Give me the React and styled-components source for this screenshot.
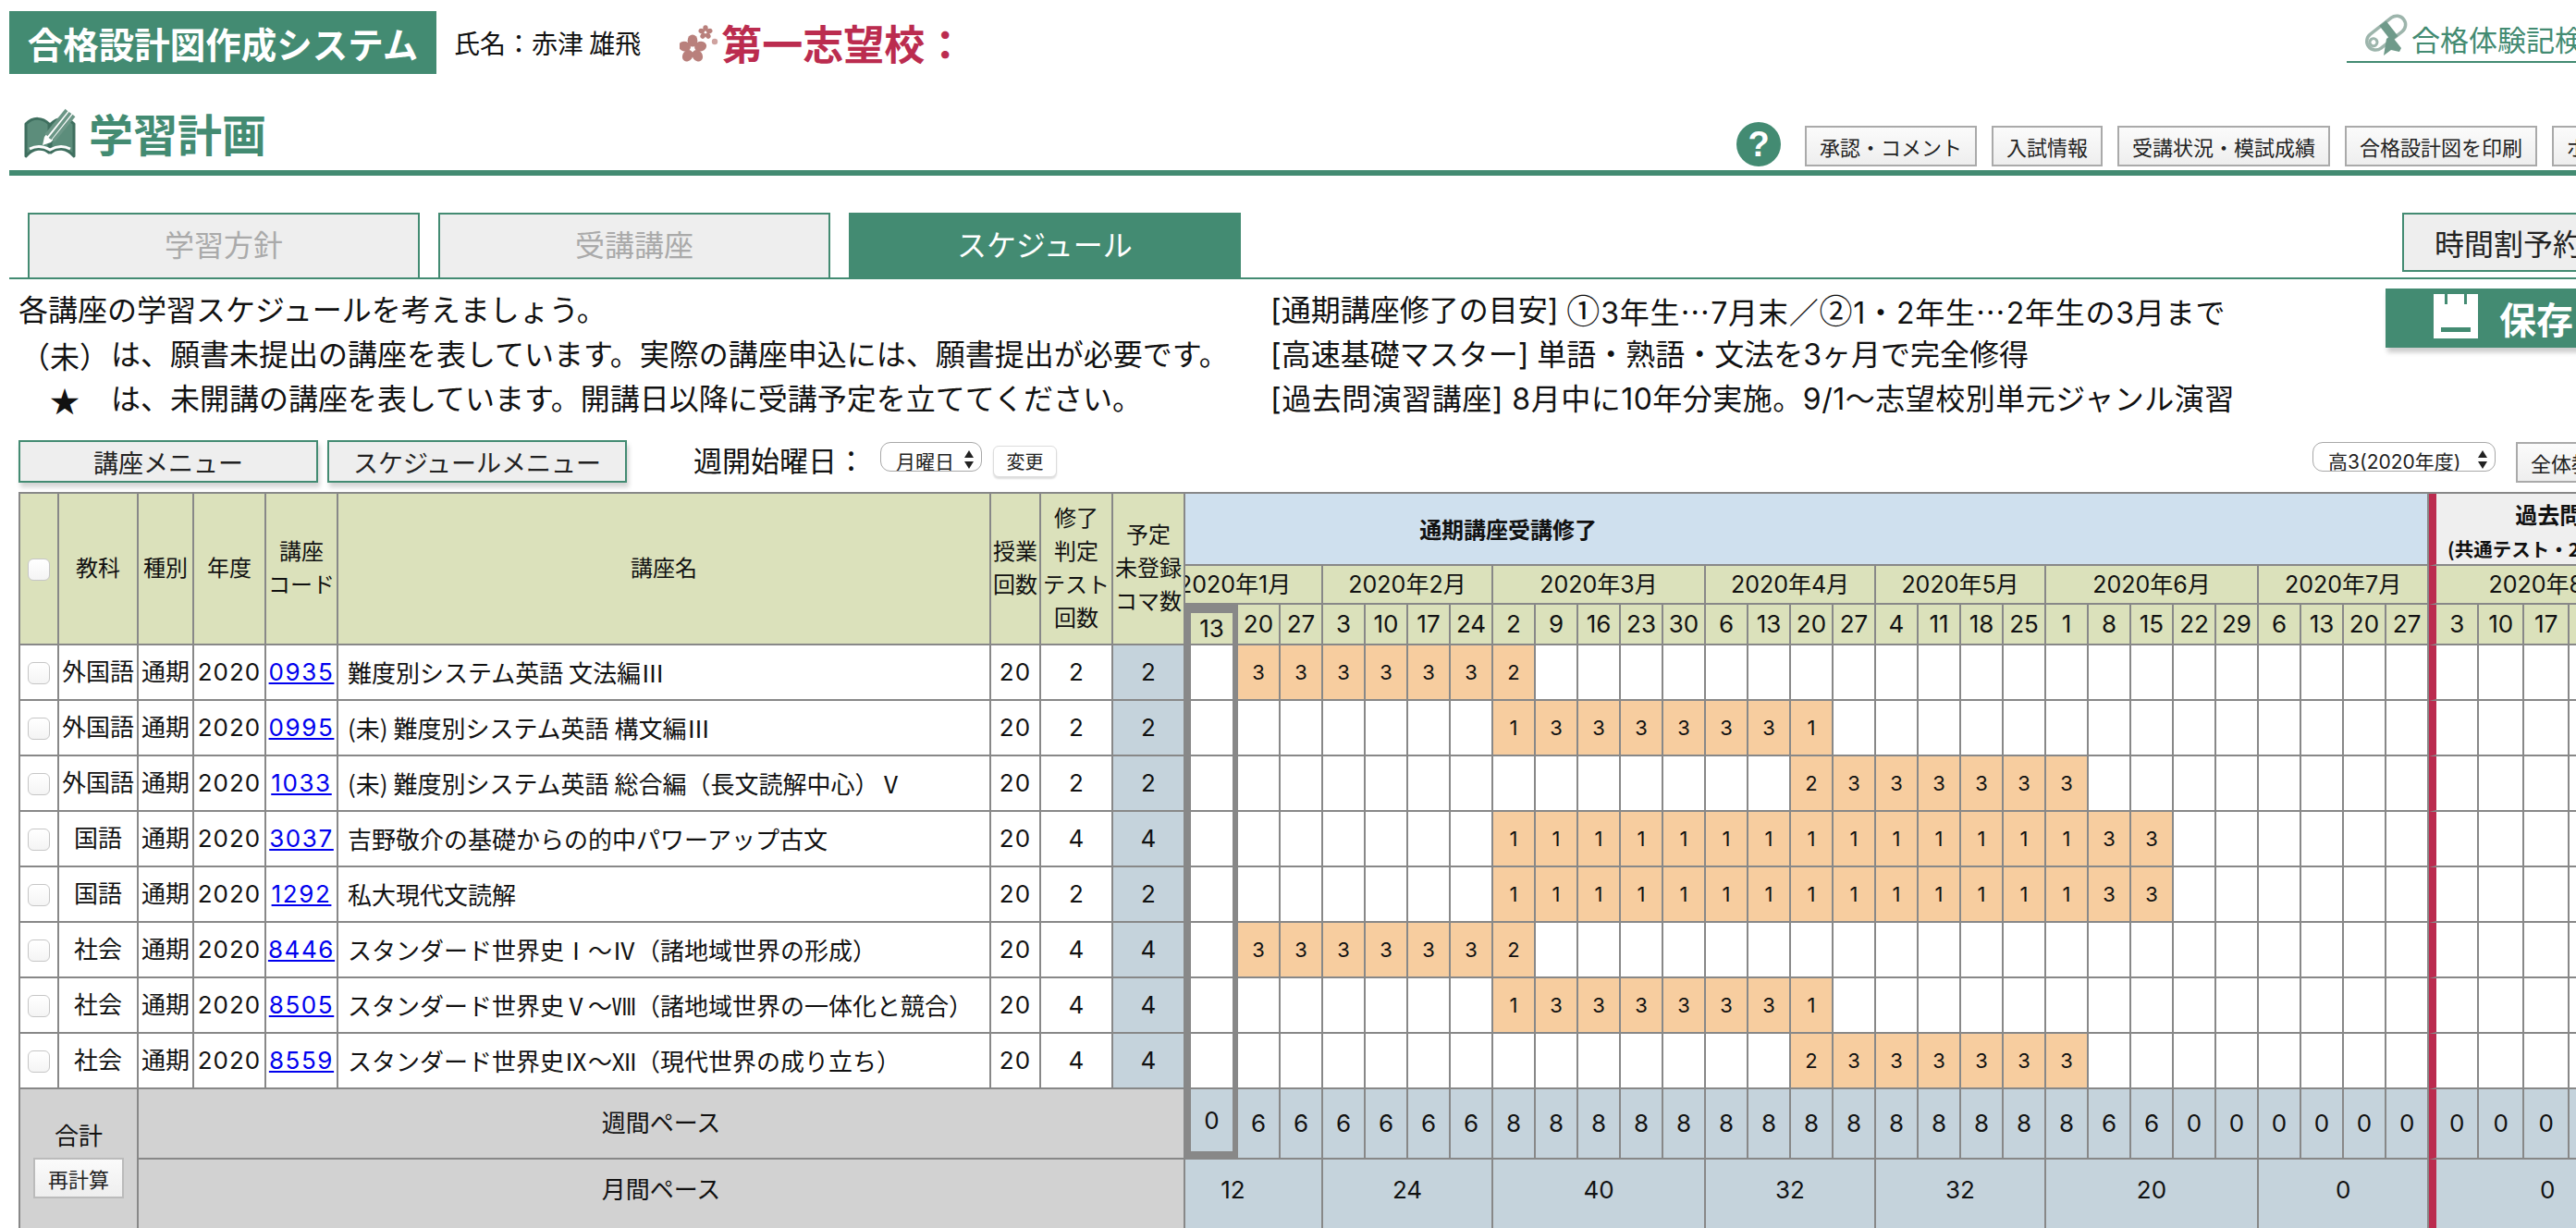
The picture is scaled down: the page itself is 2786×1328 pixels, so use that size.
import React from "react";
import styled, { createGlobalStyle } from "styled-components";

const GREEN = "#438b72";
const LINE = "#888888";
const RED = "#bb2c4f";
const SANS = `Inter, "Noto Sans CJK JP", sans-serif`;
const CJK = `"Noto Sans CJK JP", sans-serif`;

const Global = createGlobalStyle`
  html, body { margin: 0; padding: 0; width: 2786px; height: 1328px; overflow: hidden; background: #fff; }
  body { font-family: ${SANS}; color: #111; }
  * { box-sizing: border-box; }
`;

const Page = styled.div`
  width: 2786px;
  height: 1328px;
  overflow: hidden;
`;

/* ---------- top bar ---------- */
const TopBar = styled.header`
  display: flex;
  align-items: flex-start;
  height: 80px;
  padding: 12px 0 0 10px;
`;
const Logo = styled.div`
  flex: 0 0 462px;
  height: 68px;
  display: flex;
  align-items: center;
  justify-content: center;
  background: ${GREEN};
  color: #fff;
  font: 700 38.5px/1 ${CJK};
  white-space: nowrap;
`;
const Student = styled.div`
  margin-left: 19px;
  font: 28px/68px ${CJK};
  white-space: nowrap;
`;
const Goal = styled.div`
  margin-left: 42px;
  height: 68px;
  display: flex;
  align-items: center;
  color: ${RED};
  font: 700 44px/1 ${CJK};
  white-space: nowrap;
`;
const Grow = styled.div`
  flex: 1;
`;
const ExperienceLink = styled.a`
  flex: 0 0 248px;
  min-width: 0;
  height: 56px;
  display: flex;
  align-items: flex-start;
  gap: 2px;
  padding-left: 18px;
  border-bottom: 2px solid ${GREEN};
  color: ${GREEN};
  font: 31px/46px ${CJK};
  text-decoration: none;
  white-space: nowrap;
  overflow: hidden;
`;
const LinkText = styled.span`
  margin-top: 7px;
`;

/* ---------- title bar ---------- */
const TitleBar = styled.div`
  display: flex;
  align-items: flex-end;
  height: 110px;
  margin-left: 10px;
  border-bottom: 6px solid ${GREEN};
`;
const TitleBlock = styled.div`
  display: flex;
  align-items: center;
  gap: 14px;
  padding: 0 0 12px 16px;
`;
const TitleText = styled.h1`
  margin: 0;
  color: ${GREEN};
  font: 700 48px/1 ${CJK};
  white-space: nowrap;
`;
const ActionGroup = styled.div`
  flex: 0 0 908px;
  min-width: 0;
  display: flex;
  align-items: flex-end;
  padding-bottom: 4px;
  gap: 16px;
  white-space: nowrap;
`;
const HelpMark = styled.span`
  flex: 0 0 48px;
  height: 48px;
  margin-right: 10px;
  border-radius: 50%;
  background: ${GREEN};
  color: #fff;
  font: 700 38px/48px "Liberation Sans", sans-serif;
  text-align: center;
`;
const ActionButton = styled.button`
  flex: none;
  height: 44px;
  padding: 0 14px;
  border: 2px solid #aaa;
  background: linear-gradient(#fbfbfb, #eeeeee);
  color: #222;
  font: 22px/1 ${CJK};
`;

/* ---------- tabs ---------- */
const TabBar = styled.nav`
  display: flex;
  align-items: flex-start;
  gap: 20px;
  height: 72px;
  margin: 40px 0 0 10px;
  padding-left: 20px;
  border-bottom: 2px solid ${GREEN};
`;
const Tab = styled.div`
  flex: 0 0 424px;
  height: 70px;
  display: flex;
  align-items: center;
  justify-content: center;
  padding-bottom: 6px;
  border: 2px solid ${GREEN};
  border-bottom: 0;
  background: ${(p) => (p.$active ? GREEN : "#eeeeee")};
  color: ${(p) => (p.$active ? "#fff" : "#aaa")};
  font: 32px/1 ${CJK};
`;
const ReserveButton = styled.button`
  flex: 0 0 260px;
  height: 64px;
  margin-right: -72px;
  padding: 0 0 0 33px;
  border: 2px solid ${GREEN};
  background: #eeeeee;
  color: #222;
  text-align: left;
  font: 32px/1 ${CJK};
  white-space: nowrap;
`;

/* ---------- notes ---------- */
const Notes = styled.section`
  display: flex;
  align-items: flex-start;
  padding: 10px 0 0 20px;
  height: 154px;
`;
const NoteColumn = styled.div`
  flex: 0 0 ${(p) => p.$width}px;
  min-width: 0;
`;
const NoteLine = styled.div`
  display: flex;
  height: 48px;
  font-size: 32px;
  line-height: 48px;
  letter-spacing: ${(p) => p.$track || 0}px;
  white-space: pre;
`;
const NoteMarker = styled.span`
  flex: 0 0 100px;
  text-align: center;
  font-family: ${CJK};
`;
const WideRun = styled.span`
  letter-spacing: 0.8px;
`;
const Mid = styled.span`
  font-family: ${CJK};
`;
const Circled = styled.span`
  font-family: ${CJK};
  font-size: 36px;
  line-height: 1;
`;
const SaveButton = styled.button`
  flex: 0 0 300px;
  height: 64px;
  display: flex;
  align-items: center;
  gap: 23px;
  padding: 0 0 0 52px;
  border: 0;
  background: ${GREEN};
  box-shadow: 2px 5px 5px #ccc;
  color: #fff;
  font: 700 40px/1 ${CJK};
`;

/* ---------- toolbar ---------- */
const Toolbar = styled.div`
  display: flex;
  align-items: flex-start;
  height: 46px;
  margin: 20px 0 10px;
  padding-left: 20px;
  white-space: nowrap;
`;
const MenuButton = styled.button`
  flex: 0 0 324px;
  height: 46px;
  margin-right: 10px;
  border: 2px solid ${GREEN};
  background: #eeeeee;
  box-shadow: 2px 5px 5px #d4d4d4;
  color: #222;
  font: 27px/1 ${CJK};
`;
const WeekLabel = styled.span`
  margin: 0 16px 0 62px;
  font: 31px/42px ${CJK};
`;
const SelectBox = styled.div`
  flex: 0 0 ${(p) => p.$width}px;
  height: 32px;
  margin-top: 2px;
  display: flex;
  align-items: flex-start;
  justify-content: space-between;
  padding: 7px 6px 0 ${(p) => p.$pad}px;
  overflow: hidden;
  border: 1.5px solid #a8a8a8;
  border-radius: 11px;
  background: #fff;
  font-size: 21px;
  line-height: 28px;
  color: #222;
`;
const SmallButton = styled.button`
  flex: 0 0 69px;
  height: 34px;
  margin: 6px 0 0 12px;
  padding: 0;
  border: 1px solid #ddd;
  border-radius: 6px;
  background: #fff;
  box-shadow: 0 2px 2px #ddd;
  color: #222;
  font: 20px/1 ${CJK};
`;
const ToolRight = styled.div`
  flex: 0 0 285px;
  min-width: 0;
  display: flex;
  align-items: flex-start;
  gap: 22px;
`;
const OverviewButton = styled.button`
  flex: 0 0 120px;
  height: 44px;
  margin-top: 2px;
  padding: 0 0 0 14px;
  border: 2px solid #aaa;
  background: linear-gradient(#fbfbfb, #eeeeee);
  color: #222;
  text-align: left;
  white-space: nowrap;
  font: 22px/1 ${CJK};
`;

/* ---------- table ---------- */
const Table = styled.table`
  table-layout: fixed;
  width: ${(p) => p.$width}px;
  margin-left: 20px;
  border-collapse: separate;
  border-spacing: 0;
  border-top: 2px solid ${LINE};
  border-left: 2px solid ${LINE};
`;
const Cell = styled.td`
  height: ${(p) => p.$h || 60}px;
  padding: 0;
  overflow: ${(p) => (p.$clip ? "hidden" : "visible")};
  border-right: 2px solid ${LINE};
  border-bottom: 2px solid ${LINE};
  border-left: ${(p) => (p.$divider ? `8px solid ${RED}` : p.$focus ? `6px solid ${LINE}` : "0")};
  ${(p) => p.$focus && `border-right: 6px solid ${LINE};`}
  ${(p) => p.$focusTop && `border-top: 9px solid ${LINE};`}
  ${(p) => p.$focusBottom && `border-bottom: 9px solid ${LINE};`}
  background: ${(p) => p.$bg || "#fff"};
  font-size: 26px;
  line-height: 34px;
  text-align: center;
  white-space: nowrap;
`;
const HeadCell = styled(Cell).attrs({ as: "th" })`
  font-size: 24px;
  font-weight: 400;
  line-height: 36px;
  background: ${(p) => p.$bg || "#dbe1bb"};
`;
const DayCell = styled(HeadCell)`
  font-size: 26px;
  line-height: 30px;
`;
const BandTitle = styled.div`
  font: 700 24px/42px ${CJK};
  padding-right: ${(p) => p.$pr || 0}px;
`;
const BandNote = styled.div`
  font: 700 20.5px/32px ${CJK};
`;
const MonthText = styled.span`
  display: ${(p) => (p.$pull ? "block" : "inline-block")};
  font-size: 25px;
  ${(p) => p.$pull && `margin-left: -${p.$pull}px; text-align: left;`}
`;
const NameCell = styled(Cell)`
  padding-left: 10px;
  text-align: left;
  font-family: ${CJK};
`;
const CodeLink = styled.a`
  color: #0000ee;
  text-decoration: underline;
  letter-spacing: 1.6px;
`;
const Year = styled.span`
  letter-spacing: 1px;
`;
const Check = styled.input.attrs({ type: "checkbox" })`
  display: block;
  appearance: none;
  width: 24px;
  height: 24px;
  margin: 2px auto 0;
  border: 1.5px solid #c6c6c6;
  border-radius: 6px;
  background: linear-gradient(#ffffff, #f4f4f4);
`;
const PlanCell = styled(Cell)`
  font-size: 22px;
`;
const TotalCell = styled(Cell)`
  vertical-align: top;
`;
const TotalBox = styled.div`
  display: flex;
  flex-direction: column;
  align-items: center;
  height: 150px;
  padding-top: 34px;
`;
const TotalLabel = styled.div`
  font-size: 26px;
  line-height: 34px;
`;
const RecalcButton = styled.button`
  width: 98px;
  height: 44px;
  margin-top: 6px;
  padding: 0;
  border: 2px solid #bbb;
  background: linear-gradient(#fbfbfb, #eeeeee);
  color: #222;
  font: 22px/1 ${CJK};
`;
const MonthRowCell = styled(Cell)`
  padding-bottom: 8px;
`;
const MonthTotal = styled.span`
  display: inline-block;
  padding-right: ${(p) => p.$pr || 0}px;
`;

/* ---------- drawings ---------- */
const Soft = styled.svg`
  flex: none;
  filter: blur(0.6px);
`;

const Blossom = ({ cx, cy, r }) => (
  <g transform={`translate(${cx} ${cy})`}>
    {[0, 72, 144, 216, 288].map((a) => (
      <ellipse key={a} cx="0" cy={-r * 0.6} rx={r * 0.36} ry={r * 0.44} transform={`rotate(${a})`} fill="#b9807c" />
    ))}
  </g>
);
const SakuraIcon = () => (
  <Soft width="45" height="44" viewBox="0 0 45 44" style={{ marginTop: 2 }}>
    <Blossom cx={14} cy={28} r={15} />
    <Blossom cx={28} cy={10} r={7.5} />
    <circle cx="38" cy="20" r="3.2" fill="#cfa3a0" />
  </Soft>
);
const BookIcon = () => (
  <Soft width="56" height="58" viewBox="0 0 56 58">
    <path d="M2 55V20c8-8 18-7 25 0v31c-7-6-17-5-25 4Z" fill="#5c8d7b" stroke="#3f6f5f" strokeWidth="3" strokeLinejoin="round" />
    <path d="M54 55V20c-8-8-18-7-25 0v31c7-6 17-5 25 4Z" fill="#5c8d7b" stroke="#3f6f5f" strokeWidth="3" strokeLinejoin="round" />
    <path d="M6 47c8-4 15-3 22 1 7-4 14-5 22-1" fill="none" stroke="#fff" strokeWidth="3" />
    <path d="M22 34 47 2l8 7-26 31-9 3Z" fill="#fff" />
    <path d="M24 32 46 5M28 36 50 8M32 38 54 11" stroke="#6b9686" strokeWidth="3.6" />
  </Soft>
);
const ScrollIcon = () => (
  <Soft width="50" height="48" viewBox="0 0 50 48" style={{ marginTop: 2 }}>
    <g transform="rotate(-38 25 22)">
      <rect x="1" y="12" width="48" height="19" rx="9.5" fill="#fff" stroke="#9db5ac" strokeWidth="3.5" />
      <circle cx="8" cy="21" r="4" fill="none" stroke="#9db5ac" strokeWidth="3" />
      <rect x="24" y="11" width="9" height="21" fill="#6f9a8a" />
    </g>
    <path d="M25 28 22 46l8-6 9 2 2-4-11-14Z" fill="#6f9a8a" />
  </Soft>
);
const FloppyIcon = () => (
  <svg width="48" height="48" viewBox="0 0 48 48" style={{ flex: "none", marginTop: -4 }}>
    <path d="M0 0h12v11h3V0h18v11h3V0h12v48H0Z" fill="#fff" />
    <rect x="8" y="36" width="32" height="5" fill={GREEN} />
  </svg>
);
const Updown = () => (
  <svg width="14" height="24" viewBox="0 0 14 24" style={{ flex: "none" }}>
    <path d="M7 1 12 9H2ZM7 21 2 13H12Z" fill="#222" />
  </svg>
);

/* ---------- data ---------- */
const MONTHS = [
  { label: "2020年1月", days: [13, 20, 27], total: 12 },
  { label: "2020年2月", days: [3, 10, 17, 24], total: 24 },
  { label: "2020年3月", days: [2, 9, 16, 23, 30], total: 40 },
  { label: "2020年4月", days: [6, 13, 20, 27], total: 32 },
  { label: "2020年5月", days: [4, 11, 18, 25], total: 32 },
  { label: "2020年6月", days: [1, 8, 15, 22, 29], total: 20 },
  { label: "2020年7月", days: [6, 13, 20, 27], total: 0 },
  { label: "2020年8月", days: [3, 10, 17, 24, 31], total: 0 },
  { label: "2020年9月", days: [7, 14], total: 0 },
];
const DAYS = MONTHS.flatMap((m) => m.days);
const SPLIT = 29;

const paced = (from, vals) => Object.fromEntries(vals.map((v, i) => [from + i, v]));
const PLAN_A = paced(1, [3, 3, 3, 3, 3, 3, 2]);
const PLAN_B = paced(7, [1, 3, 3, 3, 3, 3, 3, 1]);
const PLAN_C = paced(14, [2, 3, 3, 3, 3, 3, 3]);
const PLAN_D = paced(7, [1, 1, 1, 1, 1, 1, 1, 1, 1, 1, 1, 1, 1, 1, 3, 3]);

const COURSES = [
  ["外国語", "0935", "難度別システム英語 文法編Ⅲ", 2, 2, PLAN_A],
  ["外国語", "0995", "(未) 難度別システム英語 構文編Ⅲ", 2, 2, PLAN_B],
  ["外国語", "1033", "(未) 難度別システム英語 総合編（長文読解中心）Ⅴ", 2, 2, PLAN_C],
  ["国語", "3037", "吉野敬介の基礎からの的中パワーアップ古文", 4, 4, PLAN_D],
  ["国語", "1292", "私大現代文読解", 2, 2, PLAN_D],
  ["社会", "8446", "スタンダード世界史Ⅰ〜Ⅳ（諸地域世界の形成）", 4, 4, PLAN_A],
  ["社会", "8505", "スタンダード世界史Ⅴ〜Ⅷ（諸地域世界の一体化と競合）", 4, 4, PLAN_B],
  ["社会", "8559", "スタンダード世界史Ⅸ〜Ⅻ（現代世界の成り立ち）", 4, 4, PLAN_C],
];
const weekTotal = (i) => {
  if (i === 0) return 0;
  if (i <= 6) return 6;
  if (i <= 20) return 8;
  if (i <= 22) return 6;
  return 0;
};

const FIXED = [44, 86, 60, 78, 78, 706, 54, 78, 78];
const dayWidth = (i) => (i === 0 ? 57 : i < SPLIT ? 46 : i === SPLIT ? 54 : 49);
const WIDTHS = [...FIXED, ...DAYS.map((_, i) => dayWidth(i))];
WIDTHS[0] -= 2;
const TABLE_WIDTH = WIDTHS.reduce((a, b) => a + b, 0) + 2;

const BLUE = "#c5d3dc";
const GRAY = "#d2d2d2";

const ScheduleTable = () => {
  let index = 0;
  const monthRanges = MONTHS.map((m) => {
    const start = index;
    index += m.days.length;
    return { ...m, start };
  });
  return (
    <Table $width={TABLE_WIDTH}>
      <colgroup>
        {WIDTHS.map((w, i) => (
          <col key={i} style={{ width: w }} />
        ))}
      </colgroup>
      <thead>
        <tr>
          <HeadCell rowSpan={3} $h={164}><Check /></HeadCell>
          <HeadCell rowSpan={3}>教科</HeadCell>
          <HeadCell rowSpan={3}>種別</HeadCell>
          <HeadCell rowSpan={3}>年度</HeadCell>
          <HeadCell rowSpan={3}>講座<br />コード</HeadCell>
          <HeadCell rowSpan={3}>講座名</HeadCell>
          <HeadCell rowSpan={3}>授業<br />回数</HeadCell>
          <HeadCell rowSpan={3}>修了<br />判定<br />テスト<br />回数</HeadCell>
          <HeadCell rowSpan={3}>予定<br />未登録<br />コマ数</HeadCell>
          <HeadCell colSpan={SPLIT} $h={78} $bg="#cfe0ee">
            <BandTitle $pr={645}>通期講座受講修了</BandTitle>
          </HeadCell>
          <HeadCell colSpan={DAYS.length - SPLIT} $h={78} $bg="#efefef" $divider>
            <BandTitle>過去問演習講座</BandTitle>
            <BandNote>(共通テスト・2次・私大過去問等)</BandNote>
          </HeadCell>
        </tr>
        <tr>
          {monthRanges.map((m, i) => (
            <HeadCell key={m.label} colSpan={m.days.length} $h={42} $divider={m.start === SPLIT} $clip={i === 0}>
              <MonthText $pull={i === 0 ? 8 : 0}>{m.label}</MonthText>
            </HeadCell>
          ))}
        </tr>
        <tr>
          {DAYS.map((d, i) => (
            <DayCell key={i} $h={44} $divider={i === SPLIT} $focus={i === 0} $focusTop={i === 0}>
              {d}
            </DayCell>
          ))}
        </tr>
      </thead>
      <tbody>
        {COURSES.map(([subject, code, name, tests, pending, plan]) => (
          <tr key={code}>
            <Cell><Check /></Cell>
            <Cell>{subject}</Cell>
            <Cell>通期</Cell>
            <Cell><Year>2020</Year></Cell>
            <Cell><CodeLink href="#">{code}</CodeLink></Cell>
            <NameCell>{name}</NameCell>
            <Cell><Year>20</Year></Cell>
            <Cell>{tests}</Cell>
            <Cell $bg={BLUE}>{pending}</Cell>
            {DAYS.map((_, i) => (
              <PlanCell key={i} $bg={plan[i] ? "#f7cd9f" : "#fff"} $focus={i === 0} $divider={i === SPLIT}>
                {plan[i]}
              </PlanCell>
            ))}
          </tr>
        ))}
        <tr>
          <TotalCell colSpan={2} rowSpan={2} $bg={GRAY}>
            <TotalBox>
              <TotalLabel>合計</TotalLabel>
              <RecalcButton>再計算</RecalcButton>
            </TotalBox>
          </TotalCell>
          <Cell colSpan={7} $h={76} $bg={GRAY}>週間ペース</Cell>
          {DAYS.map((_, i) => (
            <Cell key={i} $h={76} $bg={BLUE} $focus={i === 0} $focusBottom={i === 0} $divider={i === SPLIT}>
              {weekTotal(i)}
            </Cell>
          ))}
        </tr>
        <tr>
          <MonthRowCell colSpan={7} $h={76} $bg={GRAY}>月間ペース</MonthRowCell>
          {monthRanges.map((m, i) => (
            <MonthRowCell key={m.label} colSpan={m.days.length} $h={76} $bg={BLUE} $divider={m.start === SPLIT}>
              <MonthTotal $pr={i === 0 ? 44 : 0}>{m.total}</MonthTotal>
            </MonthRowCell>
          ))}
        </tr>
      </tbody>
    </Table>
  );
};

export default function App() {
  return (
    <Page>
      <Global />
      <TopBar>
        <Logo>合格設計図作成システム</Logo>
        <Student>氏名：赤津 雄飛</Student>
        <Goal>
          <SakuraIcon />
          第一志望校：
        </Goal>
        <Grow />
        <ExperienceLink href="#">
          <ScrollIcon />
          <LinkText>合格体験記検索</LinkText>
        </ExperienceLink>
      </TopBar>
      <TitleBar>
        <TitleBlock>
          <BookIcon />
          <TitleText>学習計画</TitleText>
        </TitleBlock>
        <Grow />
        <ActionGroup>
          <HelpMark>?</HelpMark>
          <ActionButton>承認・コメント</ActionButton>
          <ActionButton>入試情報</ActionButton>
          <ActionButton>受講状況・模試成績</ActionButton>
          <ActionButton>合格設計図を印刷</ActionButton>
          <ActionButton>ポートフォリオ</ActionButton>
        </ActionGroup>
      </TitleBar>
      <TabBar>
        <Tab>学習方針</Tab>
        <Tab>受講講座</Tab>
        <Tab $active>スケジュール</Tab>
        <Grow />
        <ReserveButton>時間割予約</ReserveButton>
      </TabBar>
      <Notes>
        <NoteColumn $width={1354}>
          <NoteLine>各講座の学習スケジュールを考えましょう。</NoteLine>
          <NoteLine>
            <NoteMarker>（未）</NoteMarker>は、願書未提出の講座を表しています。実際の講座申込には、願書提出が必要です。
          </NoteLine>
          <NoteLine>
            <NoteMarker>★</NoteMarker>は、未開講の講座を表しています。開講日以降に受講予定を立ててください。
          </NoteLine>
        </NoteColumn>
        <NoteColumn $width={1206}>
          <NoteLine>[通期講座修了の目安] <WideRun><Circled>①</Circled>3年生<Mid>…</Mid>7月末／<Circled>②</Circled>1・2年生<Mid>…</Mid>2年生の3月まで</WideRun></NoteLine>
          <NoteLine>[高速基礎マスター] 単語・熟語・文法を3ヶ月で完全修得</NoteLine>
          <NoteLine $track={0.5}>[過去問演習講座] 8月中に10年分実施。9/1〜志望校別単元ジャンル演習</NoteLine>
        </NoteColumn>
        <SaveButton>
          <FloppyIcon />
          保存
        </SaveButton>
      </Notes>
      <Toolbar>
        <MenuButton>講座メニュー</MenuButton>
        <MenuButton>スケジュールメニュー</MenuButton>
        <WeekLabel>週開始曜日：</WeekLabel>
        <SelectBox $width={110} $pad={16}>
          月曜日
          <Updown />
        </SelectBox>
        <SmallButton>変更</SmallButton>
        <Grow />
        <ToolRight>
          <SelectBox $width={198} $pad={16}>
            高3(2020年度)
            <Updown />
          </SelectBox>
          <OverviewButton>全体教科</OverviewButton>
        </ToolRight>
      </Toolbar>
      <ScheduleTable />
    </Page>
  );
}
